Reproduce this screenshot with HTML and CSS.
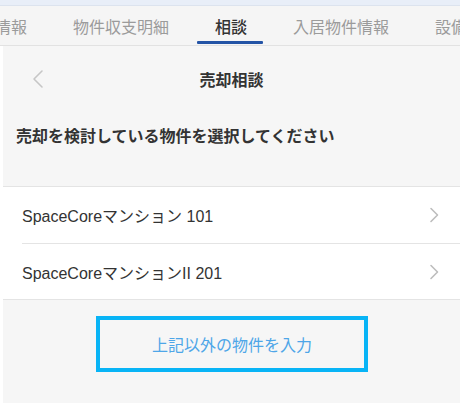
FILE: index.html
```html
<!DOCTYPE html>
<html lang="ja">
<head>
<meta charset="utf-8">
<title>売却相談</title>
<link rel="stylesheet" href="styles.css">
</head>
<body>
<div class="app">
  <div class="topstrip"></div>
  <nav class="tabs">
    <div class="tabs-track">
      <span class="tab">契約情報</span>
      <span class="tab">物件収支明細</span>
      <span class="tab active">相談</span>
      <span class="tab">入居物件情報</span>
      <span class="tab">設備情報</span>
    </div>
  </nav>
  <main class="content">
    <header class="navhead">
      <span class="back" aria-label="戻る">
        <svg width="12" height="20" viewBox="0 0 12 20"><path d="M10 2 L2 10 L10 18" fill="none" stroke="#c6c6c6" stroke-width="1.6" stroke-linecap="round" stroke-linejoin="round"/></svg>
      </span>
      <h1 class="title">売却相談</h1>
    </header>
    <p class="prompt">売却を検討している物件を選択してください</p>
    <ul class="list">
      <li class="row"><span class="row-label">SpaceCoreマンション 101</span>
        <svg class="chev" width="10" height="16" viewBox="0 0 10 16"><path d="M2 1.5 L8.5 8 L2 14.5" fill="none" stroke="#bdbdbd" stroke-width="1.6" stroke-linecap="round" stroke-linejoin="round"/></svg>
      </li>
      <li class="row"><span class="row-label">SpaceCoreマンションII 201</span>
        <svg class="chev" width="10" height="16" viewBox="0 0 10 16"><path d="M2 1.5 L8.5 8 L2 14.5" fill="none" stroke="#bdbdbd" stroke-width="1.6" stroke-linecap="round" stroke-linejoin="round"/></svg>
      </li>
    </ul>
    <div class="action">
      <button class="other-btn" type="button">上記以外の物件を入力</button>
    </div>
  </main>
</div>
</body>
</html>
```

FILE: styles.css
```css
html, body {
  margin: 0;
  padding: 0;
  background: #ffffff;
}
body {
  font-family: "Noto Sans CJK JP", "Noto Sans", sans-serif;
  color: #333333;
}
.app {
  width: 460px;
  height: 403px;
  display: flex;
  flex-direction: column;
  overflow: hidden;
}
.topstrip {
  height: 5px;
  background: #e8eef8;
  border-bottom: 1px solid #dce3ee;
}
.tabs {
  height: 39px;
  background: #f5f5f5;
  border-bottom: 1px solid #e2e2e2;
  overflow: hidden;
}
.tabs-track {
  display: flex;
  height: 100%;
  margin-left: -60px;
  white-space: nowrap;
}
.tab {
  position: relative;
  flex: none;
  display: flex;
  align-items: center;
  padding: 0 23px;
  font-size: 16px;
  color: #9b9b9b;
}
.tab.active {
  color: #333333;
  font-weight: 500;
}
.tab.active::after {
  content: "";
  position: absolute;
  left: 50%;
  bottom: 1px;
  width: 66px;
  height: 3px;
  margin-left: -34px;
  background: #2454a6;
  border-radius: 1px;
}
.content {
  flex: 1;
  margin-left: 3px;
  background: #f6f6f6;
  display: flex;
  flex-direction: column;
}
.navhead {
  height: 66px;
  display: flex;
  align-items: center;
  justify-content: center;
  position: relative;
}
.back {
  position: absolute;
  left: 29px;
  top: 23px;
  display: flex;
}
.title {
  margin: 0;
  font-size: 16px;
  font-weight: 700;
  color: #333333;
  line-height: 24px;
}
.prompt {
  margin: 0;
  padding: 11px 13px 39px;
  font-size: 16px;
  font-weight: 700;
  line-height: 24px;
  color: #333333;
}
.list {
  list-style: none;
  margin: 0;
  padding: 0 0 0 19px;
  background: #ffffff;
  border-top: 1px solid #e4e4e4;
  border-bottom: 1px solid #e4e4e4;
}
.row {
  height: 56px;
  display: flex;
  align-items: center;
  justify-content: space-between;
  padding-right: 21px;
}
.row + .row {
  border-top: 1px solid #e4e4e4;
  height: 55px;
}
.row-label {
  font-family: "Liberation Sans", "Noto Sans CJK JP", sans-serif;
  font-size: 16px;
  color: #333333;
}
.chev {
  display: block;
}
.action {
  padding-top: 16px;
  display: flex;
  justify-content: center;
}
.other-btn {
  box-sizing: border-box;
  width: 272px;
  height: 56px;
  margin-left: 1px;
  border: 4px solid #08b4f6;
  background: #f6f6f6;
  color: #4ea6e8;
  font-family: "Noto Sans CJK JP", "Noto Sans", sans-serif;
  font-size: 16px;
  padding: 0;
}
```
